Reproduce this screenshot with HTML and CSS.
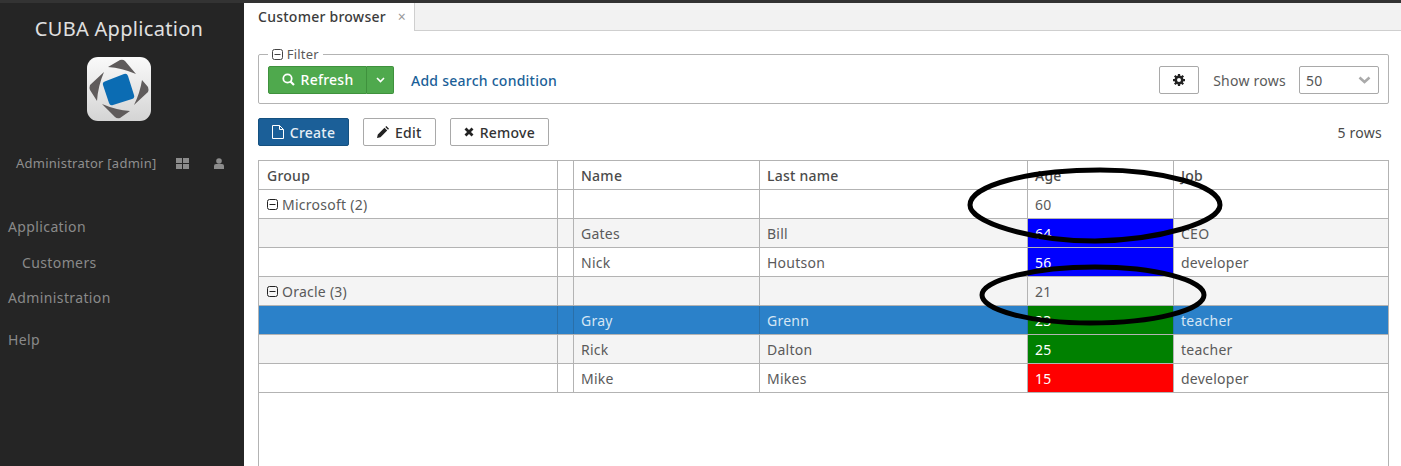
FILE: index.html
```html
<!DOCTYPE html>
<html lang="en">
<head>
<meta charset="utf-8">
<title>CUBA Application</title>
<link rel="stylesheet" href="styles.css">
</head>
<body>
<div class="app">
  <aside class="side">
    <div class="app-title">CUBA Application</div>
    <svg class="logo" width="64" height="64" viewBox="0 0 64 64">
      <defs><linearGradient id="lg" x1="0" y1="0" x2="0" y2="1"><stop offset="0" stop-color="#fafafa"/><stop offset="1" stop-color="#d4d4d4"/></linearGradient></defs>
      <rect width="64" height="64" rx="11" fill="url(#lg)"/>
      <path d="M21 10 33 3Q36 2 38 4L49 17Q35 11 21 10Z" fill="#5f5b5b"/>
      <path d="M17 15 3 28Q2 31 3 33L10 44Q11 29 17 15Z" fill="#5f5b5b"/>
      <path d="M15 47Q29 53 43 54L33 61Q30 62 28 60Z" fill="#5f5b5b"/>
      <path d="M47 48Q53 36 55 23L61 30Q62 33 61 35Z" fill="#5f5b5b"/>
      <path d="M19 24 37 17Q40 16 41 19L47 38Q48 41 45 42L26 48Q23 49 22 46L16 28Q15 25 19 24Z" fill="#0b6cb3"/>
    </svg>
    <div class="user">
      <span>Administrator [admin]</span>
      <svg class="grid-ico" width="13" height="11" viewBox="0 0 13 11"><path d="M0 0h6v5H0zM7 0h6v5H7zM0 6h6v5H0zM7 6h6v5H7z" fill="#8c8c8c"/></svg>
      <svg class="user-ico" width="10" height="11" viewBox="0 0 10 11"><circle cx="5" cy="3" r="2.800" fill="#8c8c8c"/><path d="M0 11V8q0-2 2-2h6q2 0 2 2v3z" fill="#8c8c8c"/></svg>
    </div>
    <nav class="menu">
      <div class="mi m1">Application</div>
      <div class="mi m2">Customers</div>
      <div class="mi m3">Administration</div>
      <div class="mi m4">Help</div>
    </nav>
  </aside>
  <main class="main">
    <div class="tabs">
      <div class="tab">Customer browser <span class="x">×</span></div>
    </div>
    <div class="content">
      <fieldset class="filter">
        <legend><svg width="11" height="11" viewBox="0 0 11 11"><rect x=".5" y=".5" width="10" height="10" rx="2" fill="none" stroke="#444"/><path d="M2.500 5.500h6" stroke="#444"/></svg> Filter</legend>
        <div class="split">
          <button class="btn-g main-g"><svg width="13" height="13" viewBox="0 0 13 13"><circle cx="5.500" cy="5.500" r="4.200" fill="none" stroke="#fff" stroke-width="1.800"/><path d="M8.500 8.500 12 12" stroke="#fff" stroke-width="2.200"/></svg>Refresh</button>
          <button class="btn-g caret"><svg width="9" height="6" viewBox="0 0 9 6"><path d="M1 1 4.500 4.500 8 1" fill="none" stroke="#fff" stroke-width="1.600"/></svg></button>
        </div>
        <a class="link">Add search condition</a>
        <div class="spacer"></div>
        <button class="btn gear"><svg width="12" height="12" viewBox="0 0 24 24"><circle cx="12" cy="12" r="6.500" fill="none" stroke="#222" stroke-width="5"/><path d="M12 0v24M0 12h24M3.500 3.500l17 17M20.500 3.500l-17 17" stroke="#222" stroke-width="4.500" stroke-dasharray="5 14"/></svg></button>
        <span class="show">Show rows</span>
        <div class="select"><span>50</span><svg width="13" height="8" viewBox="0 0 13 8"><path d="M1.500 1.500 6.500 6 11.500 1.500" fill="none" stroke="#aaa" stroke-width="2.600"/></svg></div>
      </fieldset>
      <div class="toolbar">
        <button class="btn primary"><svg width="12" height="14" viewBox="0 0 12 14"><path d="M.5.500h7l4 4v9H.5zM7.500.500v4h4" fill="none" stroke="#fff"/></svg>Create</button>
        <button class="btn"><svg width="12" height="12" viewBox="0 0 12 12"><path d="M0 12l.8-3.500L7.500 1.800l2.700 2.700L3.500 11.200zM8.300 1l1-1 2.700 2.700-1 1z" fill="#222"/></svg>Edit</button>
        <button class="btn"><svg width="10" height="10" viewBox="0 0 10 10"><path d="M1.500 1.500l7 7M8.500 1.500l-7 7" stroke="#222" stroke-width="2.800"/></svg>Remove</button>
        <div class="spacer"></div>
        <span class="count">5 rows</span>
      </div>
      <div class="table">
        <div class="row head">
          <div class="c c-group">Group</div><div class="c c-sel"></div><div class="c c-name">Name</div><div class="c c-last">Last name</div><div class="c c-age">Age</div><div class="c c-job">Job</div>
        </div>
        <div class="row">
          <div class="c c-group"><svg class="tog" width="11" height="11" viewBox="0 0 11 11"><rect x=".5" y=".5" width="10" height="10" rx="2" fill="none" stroke="#222"/><path d="M2.500 5.500h6" stroke="#222"/></svg>Microsoft (2)</div><div class="c c-sel"></div><div class="c c-name"></div><div class="c c-last"></div><div class="c c-age">60</div><div class="c c-job"></div>
        </div>
        <div class="row alt">
          <div class="c c-group"></div><div class="c c-sel"></div><div class="c c-name">Gates</div><div class="c c-last">Bill</div><div class="c c-age blue">64</div><div class="c c-job">CEO</div>
        </div>
        <div class="row">
          <div class="c c-group"></div><div class="c c-sel"></div><div class="c c-name">Nick</div><div class="c c-last">Houtson</div><div class="c c-age blue">56</div><div class="c c-job">developer</div>
        </div>
        <div class="row alt">
          <div class="c c-group"><svg class="tog" width="11" height="11" viewBox="0 0 11 11"><rect x=".5" y=".5" width="10" height="10" rx="2" fill="none" stroke="#222"/><path d="M2.500 5.500h6" stroke="#222"/></svg>Oracle (3)</div><div class="c c-sel"></div><div class="c c-name"></div><div class="c c-last"></div><div class="c c-age">21</div><div class="c c-job"></div>
        </div>
        <div class="row selected">
          <div class="c c-group"></div><div class="c c-sel"></div><div class="c c-name">Gray</div><div class="c c-last">Grenn</div><div class="c c-age green">23</div><div class="c c-job">teacher</div>
        </div>
        <div class="row alt">
          <div class="c c-group"></div><div class="c c-sel"></div><div class="c c-name">Rick</div><div class="c c-last">Dalton</div><div class="c c-age green">25</div><div class="c c-job">teacher</div>
        </div>
        <div class="row">
          <div class="c c-group"></div><div class="c c-sel"></div><div class="c c-name">Mike</div><div class="c c-last">Mikes</div><div class="c c-age red">15</div><div class="c c-job">developer</div>
        </div>
      </div>
    </div>
  </main>
  <svg class="ink" width="1401" height="466" viewBox="0 0 1401 466">
    <path class="stroke" d="M1100 170C1160 170 1220 185 1220 205C1220 222 1160 240 1095 241C1030 241 970 222 970 205C970 185 1030 170 1100 170Z"/>
    <path class="stroke" d="M1095 267C1155 267 1204 280 1204 295C1204 310 1155 323 1090 323C1030 323 982 310 982 295C982 280 1035 267 1095 267Z"/>
  </svg>
</div>
</body>
</html>
```
FILE: styles.css
```css
* { box-sizing: border-box; }
html, body { margin: 0; height: 100%; overflow: hidden; }
body { font-family: "Noto Sans", "Open Sans", sans-serif; font-size: 14px; letter-spacing: .25px; color: #5a5a5a; background: #fff; }
.app { display: flex; width: 1401px; height: 466px; position: relative; border-top: 3px solid #333; }
.side { width: 244px; flex: none; background: #252525; display: flex; flex-direction: column; align-items: center; padding-right: 6px; }
.app-title { color: #e0e0e0; font-size: 20px; line-height: 27px; margin-top: 12px; letter-spacing: .3px; }
.logo { margin-top: 15px; display: block; }
.user { width: 100%; display: flex; align-items: center; color: #8f8f8f; font-size: 13px; line-height: 18px; margin-top: 33px; padding-left: 16px; white-space: nowrap; }
.grid-ico { margin-left: 20px; flex: none; }
.user-ico { margin-left: 25px; flex: none; }
.menu { width: 100%; color: #8a8a8a; }
.mi { line-height: 20px; font-size: 14px; padding-left: 8px; letter-spacing: .38px; }
.m1 { margin-top: 45px; }
.m2 { margin-top: 16px; padding-left: 22px; }
.m3 { margin-top: 15px; }
.m4 { margin-top: 22px; }
.main { flex: 1; min-width: 0; display: flex; flex-direction: column; }
.tabs { height: 28px; background: #f2f2f2; border-bottom: 1px solid #cfcfcf; display: flex; flex: none; }
.tab { background: #fff; padding: 0 8px 0 14px; height: 28px; border-right: 1px solid #cfcfcf; font-size: 14px; font-weight: 500; line-height: 28px; color: #3c3c3c; white-space: nowrap; }
.tab .x { color: #999; font-weight: 400; margin-left: 8px; font-size: 14px; }
.content { padding: 0 12px 0 14px; flex: 1; }
.filter { margin: 16px 0 0; padding: 0 9px 6px 9px; height: 57px; border: 1px solid #b3b3b3; border-radius: 2px; display: flex; align-items: center; min-width: 0; }
legend { font-size: 13px; padding: 0 4px; line-height: 15px; color: #5a5a5a; }
legend svg { vertical-align: -1px; }
.split { display: flex; }
button { font-family: inherit; letter-spacing: inherit; cursor: default; }
.btn-g { height: 28px; background: #4fa94d; border: 1px solid #3f913d; color: #fff; font-size: 14px; font-weight: 500; display: flex; align-items: center; justify-content: center; gap: 6px; padding: 0; }
.main-g { width: 99px; border-radius: 2px 0 0 2px; }
.caret { width: 27px; border-left: 0; border-radius: 0 2px 2px 0; }
.link { color: #1b5f98; font-weight: 500; font-size: 14px; margin-left: 17px; padding-top: 1px; }
.spacer { flex: 1; }
.btn { height: 28px; border: 1px solid #a9a9a9; background: #fff; border-radius: 2px; color: #333; font-size: 14px; font-weight: 500; display: flex; align-items: center; justify-content: center; gap: 6px; padding: 0 13px; }
.gear { width: 40px; padding: 0; }
.show { margin-left: 14px; padding-top: 1px; color: #5a5a5a; font-size: 14px; }
.select { width: 80px; height: 28px; margin-left: 13px; border: 1px solid #a9a9a9; border-radius: 2px; display: flex; align-items: center; justify-content: space-between; padding: 1px 7px 0 6px; color: #555; }
.toolbar { display: flex; align-items: center; margin-top: 14px; gap: 14px; }
.primary { background: #1b5f98; border-color: #15507f; color: #e6eef5; width: 91px; padding: 0; }
.count { color: #4a4a4a; font-size: 14px; padding-right: 7px; }
.table { margin-top: 14px; height: 320px; border: 1px solid #b3b3b3; border-bottom: 0; }
.row { display: flex; height: 29px; border-bottom: 1px solid #b3b3b3; }
.row.alt { background: #f4f4f4; }
.head { font-weight: 500; }
.head .c { color: #4b4b4b; }
.c { border-right: 1px solid #b3b3b3; padding-left: 7px; padding-top: 1px; font-size: 14px; flex: none; height: 28px; display: flex; align-items: center; }
.c-group { width: 299px; padding-left: 8px; }
.c-sel { width: 16px; padding: 0; }
.c-name { width: 186px; }
.c-last { width: 268px; }
.c-age { width: 146px; }
.c-job { width: 214px; border-right: 0; }
.tog { margin-right: 4px; }
.blue { background: #0000ff; color: #fff; }
.green { background: #008000; color: #fff; }
.red { background: #ff0000; color: #fff; }
.selected { background: #2b81c9; }
.selected .c { border-right-color: #2a6fa8; color: #d5e6f4; }
.selected .c-age { color: #fff; }
.ink { position: absolute; left: 0; top: -3px; pointer-events: none; }
.stroke { fill: none; stroke: #000; stroke-width: 5; }
```
